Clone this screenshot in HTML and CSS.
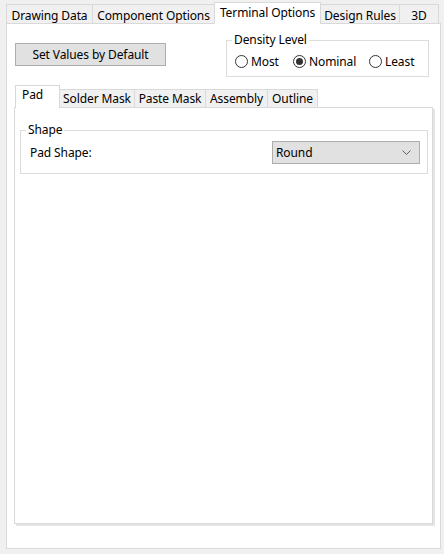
FILE: index.html
```html
<!DOCTYPE html>
<html>
<head>
<meta charset="utf-8">
<link rel="stylesheet" href="styles.css">
</head>
<body>
<div class="window">
  <div class="tabs">
    <div class="tab t1">Drawing Data</div>
    <div class="tab t2">Component Options</div>
    <div class="tab sel t3">Terminal Options</div>
    <div class="tab t4">Design Rules</div>
    <div class="tab t5">3D</div>
  </div>
  <div class="panel">
    <div class="top-row">
      <div class="button">Set Values by Default</div>
      <fieldset class="group density">
        <legend>Density Level</legend>
        <div class="radios">
          <div class="radio r-most"><span class="circle"></span><span>Most</span></div>
          <div class="radio r-nom"><span class="circle checked"></span><span>Nominal</span></div>
          <div class="radio r-least"><span class="circle"></span><span>Least</span></div>
        </div>
      </fieldset>
    </div>
    <div class="itabs">
      <div class="itab sel i1">Pad</div>
      <div class="itab i2">Solder Mask</div>
      <div class="itab i3">Paste Mask</div>
      <div class="itab i4">Assembly</div>
      <div class="itab i5">Outline</div>
    </div>
    <div class="ipanel">
      <fieldset class="group shape">
        <legend>Shape</legend>
        <div class="shape-row">
          <span class="label">Pad Shape:</span>
          <div class="select">
            <span>Round</span>
            <svg class="chev" width="9" height="5" viewBox="0 0 9 5"><path d="M0.5 0.5 L4.5 4.5 L8.5 0.5" fill="none" stroke="#606060" stroke-width="1"/></svg>
          </div>
        </div>
      </fieldset>
    </div>
  </div>
</div>
</body>
</html>
```
FILE: styles.css
```css
* { box-sizing: border-box; }
html, body { margin: 0; padding: 0; }
body {
  background: #f0f0f0;
  font-family: "Noto Sans", "Open Sans", sans-serif;
  font-size: 12px;
  color: #000;
  width: 444px;
  height: 554px;
  overflow: hidden;
  letter-spacing: -0.1px;
}
.window { padding: 2px 0 0 6px; }

.tabs {
  display: flex;
  align-items: flex-end;
  height: 21px;
  position: relative;
  z-index: 2;
}
.tab {
  height: 19px;
  line-height: 17px;
  padding-top: 2px;
  text-align: center;
  background: #f0f0f0;
  border: 1px solid #d9d9d9;
  border-bottom: none;
  margin-left: -1px;
  white-space: nowrap;
}
.tab.t1 { margin-left: 0; width: 87px; }
.tab.t2 { width: 123px; }
.tab.t3 { width: 107px; }
.tab.t4 { width: 80px; }
.tab.t5 { width: 40px; }
.tab.sel {
  background: #fff;
  height: 22px;
  margin-bottom: -1px;
  padding-top: 0;
  line-height: 20px;
  position: relative;
  z-index: 3;
}

.panel {
  width: 435px;
  height: 526px;
  background: #fff;
  border: 1px solid #d9d9d9;
  position: relative;
  z-index: 1;
}

.top-row {
  display: flex;
  align-items: flex-start;
  padding-left: 8px;
}
.button {
  margin-top: 19px;
  width: 151px;
  height: 23px;
  line-height: 21px;
  text-align: center;
  background: #e1e1e1;
  border: 1px solid #adadad;
}

.group {
  margin: 0;
  border: 1px solid #dcdcdc;
  min-width: 0;
}
.group legend {
  padding: 0 2px;
  margin-left: 5px;
  line-height: 14px;
}

.density {
  margin-top: 9px;
  margin-left: 60px;
  width: 203px;
  height: 44px;
  padding: 7px 0 0 0;
}
.radios {
  display: flex;
  height: 14px;
  align-items: center;
  padding-left: 8px;
}
.radio {
  display: flex;
  align-items: center;
  gap: 3px;
}
.r-most { width: 58px; }
.r-nom { width: 76px; }
.circle {
  width: 13px;
  height: 13px;
  border: 1px solid #333;
  border-radius: 50%;
  background: #fff;
  display: flex;
  align-items: center;
  justify-content: center;
  flex: none;
}
.circle.checked::after {
  content: "";
  width: 7px;
  height: 7px;
  border-radius: 50%;
  background: #333;
}

.itabs {
  display: flex;
  align-items: flex-end;
  height: 22px;
  margin-top: 8px;
  padding-left: 8px;
  position: relative;
  z-index: 2;
}
.itab {
  height: 18px;
  line-height: 17px;
  text-align: center;
  background: #f0f0f0;
  border: 1px solid #d9d9d9;
  border-bottom: none;
  margin-left: -1px;
  white-space: nowrap;
}
.itab.i1 { margin-left: 0; width: 45px; }
.itab.i2 { width: 76px; }
.itab.i3 { width: 72px; }
.itab.i4 { width: 63px; }
.itab.i5 { width: 51px; }
.itab.sel {
  background: #fff;
  height: 23px;
  margin-bottom: -1px;
  line-height: 18px;
  text-align: left;
  padding-left: 6px;
  position: relative;
  z-index: 3;
}

.ipanel {
  margin-left: 7px;
  width: 419px;
  height: 417px;
  border: 1px solid #d9d9d9;
  background: #fff;
  box-shadow: 2px 2px 0 #e4e4e4;
  padding: 15px 0 0 5px;
  position: relative;
  z-index: 1;
}

.shape {
  width: 408px;
  height: 51px;
  padding: 4px 0 0 0;
}
.shape-row {
  display: flex;
  align-items: center;
  justify-content: space-between;
  padding: 0 7px 0 9px;
}
.select {
  width: 148px;
  height: 23px;
  background: #e1e1e1;
  border: 1px solid #adadad;
  display: flex;
  align-items: center;
  justify-content: space-between;
  padding: 0 8px 0 3px;
}
.chev { display: block; }
```
